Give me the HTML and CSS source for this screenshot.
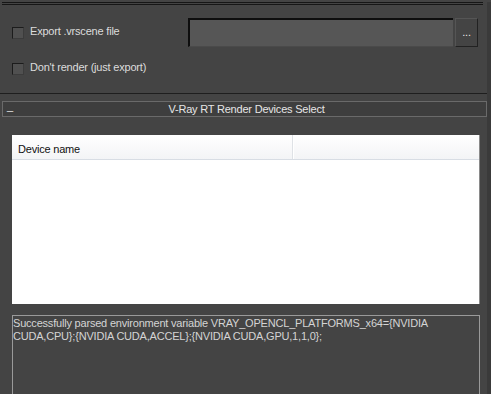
FILE: index.html
```html
<!DOCTYPE html>
<html>
<head>
<meta charset="utf-8">
<link rel="stylesheet" href="styles.css">
</head>
<body>
<div class="panel">
  <div class="toplines"></div>
  <div class="export">
    <div class="checks">
      <label class="check"><span class="box"></span><span>Export .vrscene file</span></label>
      <label class="check"><span class="box"></span><span>Don't render (just export)</span></label>
    </div>
    <div class="pathrow">
      <div class="field"></div>
      <div class="btn">...</div>
    </div>
  </div>
  <div class="sep"></div>
  <div class="rollout">
    <span class="minus">_</span>
    <span class="title">V-Ray RT Render Devices Select</span>
  </div>
  <div class="list">
    <div class="lhead">
      <div class="col1">Device name</div>
      <div class="col2"></div>
    </div>
  </div>
  <div class="log">Successfully parsed environment variable VRAY_OPENCL_PLATFORMS_x64={NVIDIA CUDA,CPU};{NVIDIA CUDA,ACCEL};{NVIDIA CUDA,GPU,1,1,0};</div>
</div>
</body>
</html>
```
FILE: styles.css
```css
html, body { margin: 0; padding: 0; }
body {
  background: #444444;
  width: 491px;
  height: 394px;
  overflow: hidden;
  font-family: "Liberation Sans", Arial, sans-serif;
  font-size: 11px;
  letter-spacing: -0.2px;
  color: #dcdcdc;
}
.panel {
  position: relative;
  height: 394px;
  border-right: 4px solid #3a3a3a;
  box-sizing: border-box;
  width: 491px;
}
.toplines {
  margin: 2px 4px 0 2px;
  height: 3px;
  border-top: 1px solid #161616;
  border-bottom: 1px solid #161616;
  box-sizing: border-box;
}
.export {
  display: flex;
  justify-content: space-between;
  height: 88px;
}
.checks {
  display: flex;
  flex-direction: column;
  gap: 19px;
  padding: 19px 0 0 12px;
}
.check {
  display: flex;
  align-items: center;
  gap: 6px;
  height: 17px;
}
.check span:last-child { position: relative; top: -2px; }
.box {
  width: 10px;
  height: 10px;
  background: #505050;
  border: 1px solid #1c1c1c;
  border-right-color: #3c3c3c;
  border-bottom-color: #3c3c3c;
}
.pathrow {
  display: flex;
  gap: 2px;
  padding: 13px 9px 0 0;
  height: 29px;
}
.field {
  width: 265px;
  background: #565656;
  border-top: 2px solid #0e0e0e;
  border-left: 2px solid #0e0e0e;
  border-bottom: 1px solid #4a4a4a;
  box-sizing: border-box;
  height: 29px;
}
.btn {
  width: 23px;
  height: 29px;
  box-sizing: border-box;
  border: 1px solid #222;
  border-left-color: #555;
  border-top-color: #555;
  color: #e8e8e8;
  text-align: center;
  line-height: 26px;
  font-size: 11px;
}
.sep {
  height: 1px;
  background: #1e1e1e;
}
.rollout {
  margin: 7px 0 0 2px;
  width: 485px;
  height: 16px;
  box-sizing: border-box;
  border: 1px solid #6a6a6a;
  background: #3e3e3e;
  display: flex;
  align-items: center;
  position: relative;
  color: #e6e6e6;
}
.minus {
  position: absolute;
  left: 4px;
  top: -2px;
}
.title {
  flex: 1;
  text-align: center;
  padding-left: 4px;
}
.list {
  margin: 18px 0 0 12px;
  width: 468px;
  height: 169px;
  background: #ffffff;
  border-right: 1px solid #8a8a8a;
  box-sizing: border-box;
}
.lhead {
  display: flex;
  height: 25px;
  border-bottom: 1px solid #d8dde4;
  background: linear-gradient(#ffffff, #f3f4f6);
  box-sizing: border-box;
  color: #111;
}
.col1 {
  width: 281px;
  padding: 8px 0 0 6px;
  box-sizing: border-box;
  border-right: 1px solid #dfe2e6;
}
.col2 { flex: 1; border-left: 1px solid #fff; }
.log {
  margin: 11px 0 0 12px;
  width: 468px;
  height: 90px;
  box-sizing: border-box;
  border: 1px solid #9a9a9a;
  border-bottom: none;
  background: #444;
  padding: 1px 2px 0 0;
  line-height: 13px;
  color: #d4d4d4;
}
```
